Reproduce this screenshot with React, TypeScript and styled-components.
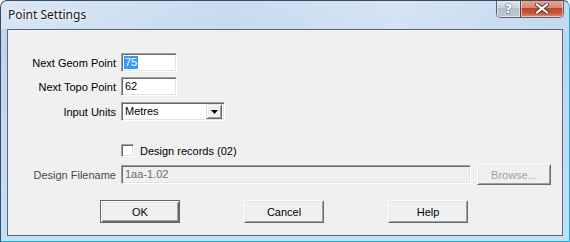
import React from "react";
import styled, { createGlobalStyle } from "styled-components";

const Global = createGlobalStyle`
  html, body { margin: 0; padding: 0; background: #fff; }
  body { width: 570px; height: 242px; overflow: hidden; }
`;

const Window = styled.div`
  width: 570px;
  height: 242px;
  box-sizing: border-box;
  display: flex;
  flex-direction: column;
  border-radius: 7px 7px 0 0;
  border: 1px solid #3c4a5c;
  border-bottom-color: #1ab0e8;
  border-right-color: #1ab0e8;
  background: linear-gradient(180deg, #c4d9ee 0%, #bcd5ee 20%, #c5dbf2 60%, #bfe0f8 100%);
  position: relative;
  overflow: hidden;
`;

const TitleBar = styled.div`
  height: 28px;
  display: flex;
  align-items: flex-start;
  justify-content: space-between;
  padding-left: 7px;
  background: linear-gradient(90deg, rgba(255,255,255,0.35) 0%, rgba(255,255,255,0.1) 40%, rgba(255,255,255,0.3) 70%, rgba(255,255,255,0.05) 100%);
`;

const Title = styled.div`
  font-family: "Noto Sans", "Open Sans", sans-serif;
  font-size: 12px;
  color: #1a1a1a;
  margin-top: 5px;
  text-shadow: 0 0 6px #fff, 0 0 3px #fff;
`;

const Caption = styled.div`
  display: flex;
  margin-right: 5px;
  margin-top: -1px;
  border: 1px solid #5a6070;
  border-top: none;
  border-radius: 0 0 5px 5px;
  overflow: hidden;
  height: 17px;
`;

const CapBtn = styled.div<{ $red?: boolean; $w: number }>`
  width: ${(p) => p.$w}px;
  height: 17px;
  display: flex;
  align-items: center;
  justify-content: center;
  box-sizing: border-box;
  border-left: ${(p) => (p.$red ? "1px solid #6a3a3a" : "none")};
  background: ${(p) =>
    p.$red
      ? "linear-gradient(180deg, #e9a99a 0%, #d98572 45%, #c0432a 50%, #cc5a3c 80%, #e0957a 100%)"
      : "linear-gradient(180deg, #dfe6ee 0%, #c9d3de 45%, #b2bfcd 50%, #bac7d4 100%)"};
  box-shadow: inset 0 0 0 1px rgba(255,255,255,0.5);
`;

const QMark = styled.span`
  font-family: "DejaVu Sans", sans-serif;
  font-weight: bold;
  font-size: 13px;
  color: #fff;
  line-height: 1;
  -webkit-text-stroke: 0.8px #4a5566;
  paint-order: stroke fill;
`;

const Client = styled.div`
  flex: 1;
  margin: 0 6px 5px 6px;
  border: 1px solid #5d6877;
  background: #f0f0f0;
  font-family: "Liberation Sans", Arial, sans-serif;
  font-size: 11px;
  color: #000;
  display: flex;
  flex-direction: column;
  padding-top: 23px;
  position: relative;
`;

const Row = styled.div<{ $mt?: number }>`
  display: grid;
  grid-template-columns: 108px auto 1fr;
  column-gap: 5px;
  align-items: center;
  margin-top: ${(p) => p.$mt ?? 0}px;
`;

const Label = styled.div<{ $dim?: boolean }>`
  text-align: right;
  color: ${(p) => (p.$dim ? "#4a4a4a" : "#000")};
  white-space: nowrap;
`;

const Field = styled.div<{ $w: number; $disabled?: boolean }>`
  width: ${(p) => p.$w}px;
  height: 19px;
  box-sizing: border-box;
  border-top: 1px solid #a0a0a0;
  border-left: 1px solid #a0a0a0;
  border-bottom: 1px solid #ffffff;
  border-right: 1px solid #ffffff;
  box-shadow: inset 1px 1px 0 #696969, inset -1px -1px 0 #e3e3e3;
  background: ${(p) => (p.$disabled ? "#f0f0f0" : "#fff")};
  color: ${(p) => (p.$disabled ? "#6d6d6d" : "#000")};
  display: flex;
  align-items: center;
  padding-left: 3px;
  line-height: 13px;
`;

const Sel = styled.span`
  background: #3399ff;
  color: #fff;
  padding: 0 1px;
  margin-left: -1px;
`;

const Combo = styled(Field)`
  padding-right: 2px;
  justify-content: space-between;
`;

const Arrow = styled.div`
  width: 16px;
  height: 15px;
  box-sizing: border-box;
  background: #f0f0f0;
  border-top: 1px solid #e3e3e3;
  border-left: 1px solid #e3e3e3;
  border-bottom: 1px solid #696969;
  border-right: 1px solid #696969;
  box-shadow: inset 1px 1px 0 #fff, inset -1px -1px 0 #a0a0a0;
  display: flex;
  align-items: center;
  justify-content: center;
`;

const CheckRow = styled.div`
  display: flex;
  align-items: center;
  gap: 6px;
  margin-left: 113px;
  margin-top: 23px;
`;

const Box = styled.div`
  width: 13px;
  height: 13px;
  box-sizing: border-box;
  background: #fff;
  border-top: 1px solid #a0a0a0;
  border-left: 1px solid #a0a0a0;
  border-bottom: 1px solid #fff;
  border-right: 1px solid #fff;
  box-shadow: inset 1px 1px 0 #696969, inset -1px -1px 0 #e3e3e3;
`;

const Button = styled.div<{ $default?: boolean; $disabled?: boolean; $w: number; $h: number }>`
  width: ${(p) => p.$w}px;
  height: ${(p) => p.$h}px;
  box-sizing: border-box;
  display: flex;
  align-items: center;
  justify-content: center;
  background: #f0f0f0;
  color: ${(p) => (p.$disabled ? "#a0a0a0" : "#000")};
  border-top: 1px solid ${(p) => (p.$default ? "#646464" : "#fff")};
  border-left: 1px solid ${(p) => (p.$default ? "#646464" : "#fff")};
  border-bottom: 1px solid ${(p) => (p.$default ? "#646464" : "#696969")};
  border-right: 1px solid ${(p) => (p.$default ? "#646464" : "#696969")};
  box-shadow: ${(p) =>
    p.$default
      ? "inset 1px 1px 0 #fff, inset -1px -1px 0 #696969, inset 2px 2px 0 #e3e3e3, inset -2px -2px 0 #a0a0a0"
      : "inset 1px 1px 0 #e3e3e3, inset -1px -1px 0 #a0a0a0"};
`;

const BrowseButton = styled(Button)`
  margin-left: 1px;
`;

const ButtonRow = styled.div`
  display: flex;
  margin-top: 15px;
  padding-left: 92px;
  gap: 64px;
`;

export default function App() {
  return (
    <>
      <Global />
      <Window>
        <TitleBar>
          <Title>Point Settings</Title>
          <Caption>
            <CapBtn $w={23}>
              <QMark>?</QMark>
            </CapBtn>
            <CapBtn $w={43} $red>
              <svg width="14" height="11" viewBox="0 0 14 11">
                <path d="M2 1.5 L12 9.5 M12 1.5 L2 9.5" stroke="#5a2a22" strokeWidth="4" strokeLinecap="square" />
                <path d="M2 1.5 L12 9.5 M12 1.5 L2 9.5" stroke="#ffffff" strokeWidth="2.2" strokeLinecap="square" />
              </svg>
            </CapBtn>
          </Caption>
        </TitleBar>
        <Client>
          <Row>
            <Label>Next Geom Point</Label>
            <Field $w={56}>
              <Sel>75</Sel>
            </Field>
          </Row>
          <Row $mt={5}>
            <Label>Next Topo Point</Label>
            <Field $w={56}>62</Field>
          </Row>
          <Row $mt={6}>
            <Label>Input Units</Label>
            <Combo $w={104}>
              <span>Metres</span>
              <Arrow>
                <svg width="7" height="4" viewBox="0 0 7 4">
                  <path d="M0 0 H7 L3.5 4 Z" fill="#000" />
                </svg>
              </Arrow>
            </Combo>
          </Row>
          <CheckRow>
            <Box />
            <span>Design records (02)</span>
          </CheckRow>
          <Row $mt={7}>
            <Label $dim>Design Filename</Label>
            <Field $w={350} $disabled>1aa-1.02</Field>
            <BrowseButton $w={74} $h={21} $disabled>
              Browse...
            </BrowseButton>
          </Row>
          <ButtonRow>
            <Button $w={80} $h={23} $default>OK</Button>
            <Button $w={80} $h={23}>Cancel</Button>
            <Button $w={80} $h={23}>Help</Button>
          </ButtonRow>
        </Client>
      </Window>
    </>
  );
}
